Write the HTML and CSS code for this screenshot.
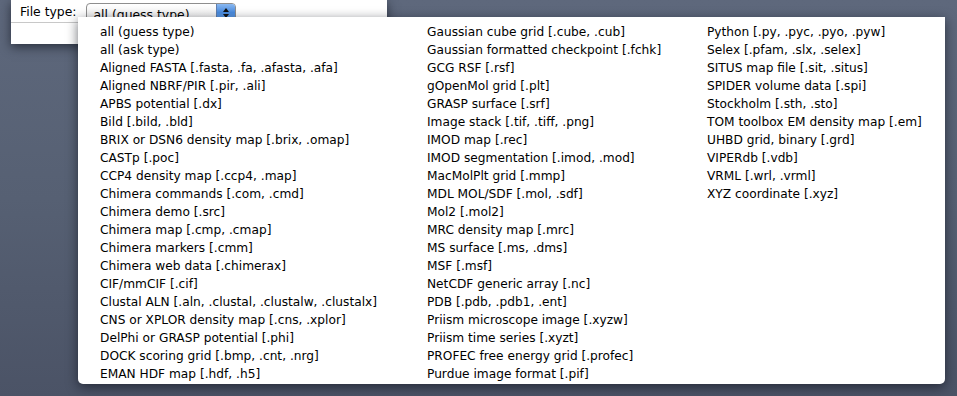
FILE: index.html
```html
<!DOCTYPE html>
<html lang="en">
<head>
	<meta charset="UTF-8">
	<title>Open File - File type</title>
	<link rel="stylesheet" href="styles.css">
</head>
<body>
	<div id="desktop">
		<div id="dialog">
			<div class="typeRow">
				<label for="typeSelect">File type:</label>
				<div class="select" id="typeSelect">
					<span class="selText">all (guess type)</span>
					<span class="selBtn">
						<svg width="8" height="12" viewBox="0 0 8 12"><path d="M4 1 L7 5 L1 5 Z" fill="#111"/><path d="M4 11 L7 7 L1 7 Z" fill="#111"/></svg>
					</span>
				</div>
			</div>
			<div class="dialogBody"></div>
		</div>

		<!-- popup menu with the file types -->
		<div id="menu">
			<ul class="col col1">
				<li>all (guess type)</li>
				<li>all (ask type)</li>
				<li>Aligned FASTA [.fasta, .fa, .afasta, .afa]</li>
				<li>Aligned NBRF/PIR [.pir, .ali]</li>
				<li>APBS potential [.dx]</li>
				<li>Bild [.bild, .bld]</li>
				<li>BRIX or DSN6 density map [.brix, .omap]</li>
				<li>CASTp [.poc]</li>
				<li>CCP4 density map [.ccp4, .map]</li>
				<li>Chimera commands [.com, .cmd]</li>
				<li>Chimera demo [.src]</li>
				<li>Chimera map [.cmp, .cmap]</li>
				<li>Chimera markers [.cmm]</li>
				<li>Chimera web data [.chimerax]</li>
				<li>CIF/mmCIF [.cif]</li>
				<li>Clustal ALN [.aln, .clustal, .clustalw, .clustalx]</li>
				<li>CNS or XPLOR density map [.cns, .xplor]</li>
				<li>DelPhi or GRASP potential [.phi]</li>
				<li>DOCK scoring grid [.bmp, .cnt, .nrg]</li>
				<li>EMAN HDF map [.hdf, .h5]</li>
			</ul>
			<ul class="col col2">
				<li>Gaussian cube grid [.cube, .cub]</li>
				<li>Gaussian formatted checkpoint [.fchk]</li>
				<li>GCG RSF [.rsf]</li>
				<li>gOpenMol grid [.plt]</li>
				<li>GRASP surface [.srf]</li>
				<li>Image stack [.tif, .tiff, .png]</li>
				<li>IMOD map [.rec]</li>
				<li>IMOD segmentation [.imod, .mod]</li>
				<li>MacMolPlt grid [.mmp]</li>
				<li>MDL MOL/SDF [.mol, .sdf]</li>
				<li>Mol2 [.mol2]</li>
				<li>MRC density map [.mrc]</li>
				<li>MS surface [.ms, .dms]</li>
				<li>MSF [.msf]</li>
				<li>NetCDF generic array [.nc]</li>
				<li>PDB [.pdb, .pdb1, .ent]</li>
				<li>Priism microscope image [.xyzw]</li>
				<li>Priism time series [.xyzt]</li>
				<li>PROFEC free energy grid [.profec]</li>
				<li>Purdue image format [.pif]</li>
			</ul>
			<ul class="col col3">
				<li>Python [.py, .pyc, .pyo, .pyw]</li>
				<li>Selex [.pfam, .slx, .selex]</li>
				<li>SITUS map file [.sit, .situs]</li>
				<li>SPIDER volume data [.spi]</li>
				<li>Stockholm [.sth, .sto]</li>
				<li>TOM toolbox EM density map [.em]</li>
				<li>UHBD grid, binary [.grd]</li>
				<li>VIPERdb [.vdb]</li>
				<li>VRML [.wrl, .vrml]</li>
				<li>XYZ coordinate [.xyz]</li>
			</ul>
		</div>
	</div>
</body>
</html>
```

FILE: styles.css
```css
html, body {
	margin: 0;
	padding: 0;
}
body {
	font-family: "DejaVu Sans", "Liberation Sans", sans-serif;
	font-size: 12px;
	color: #000;
}
#desktop {
	position: relative;
	width: 957px;
	height: 396px;
	overflow: hidden;
	background: linear-gradient(to bottom, #5e687c 0%, #566073 50%, #4b5366 100%);
}
#dialog {
	margin-left: 11px;
	width: 376px;
	height: 44px;
	background: #fff;
	box-shadow: 0 3px 10px rgba(20, 24, 34, 0.7);
}
.typeRow {
	display: flex;
	align-items: flex-start;
	height: 23px;
	border-bottom: 1px solid #c8c8c8;
	box-sizing: border-box;
	padding-left: 9px;
	padding-top: 3px;
}
.typeRow label {
	margin-right: 9px;
	line-height: 18px;
	font-size: 12.4px;
}
.select {
	display: flex;
	width: 150px;
	height: 19px;
	border: 1px solid #8e8e8e;
	border-radius: 4px;
	box-sizing: border-box;
	background: linear-gradient(to bottom, #fff, #ececec);
	overflow: hidden;
}
.selText {
	flex: 1;
	padding-left: 7px;
	line-height: 16px;
	padding-top: 3px;
	font-size: 12.4px;
}
.selBtn {
	width: 18px;
	display: flex;
	align-items: center;
	justify-content: center;
	background: linear-gradient(to bottom, #8ab8f0, #4a8ce0 50%, #6aa6ee);
	border-left: 1px solid #5f7fb0;
}
#menu {
	position: absolute;
	left: 78px;
	top: 17px;
	width: 867px;
	height: 367px;
	background: #fff;
	border-radius: 0 0 5px 5px;
	box-shadow: 0 3px 12px rgba(10, 14, 24, 0.6);
	display: flex;
	padding-top: 6px;
	box-sizing: border-box;
	font-size: 12.2px;
}
.col {
	list-style: none;
	margin: 0;
	padding: 0;
}
.col li {
	height: 18px;
	line-height: 18px;
	white-space: nowrap;
}
.col1 {
	padding-left: 22px;
	width: 327px;
}
.col2 {
	width: 280px;
}
```
